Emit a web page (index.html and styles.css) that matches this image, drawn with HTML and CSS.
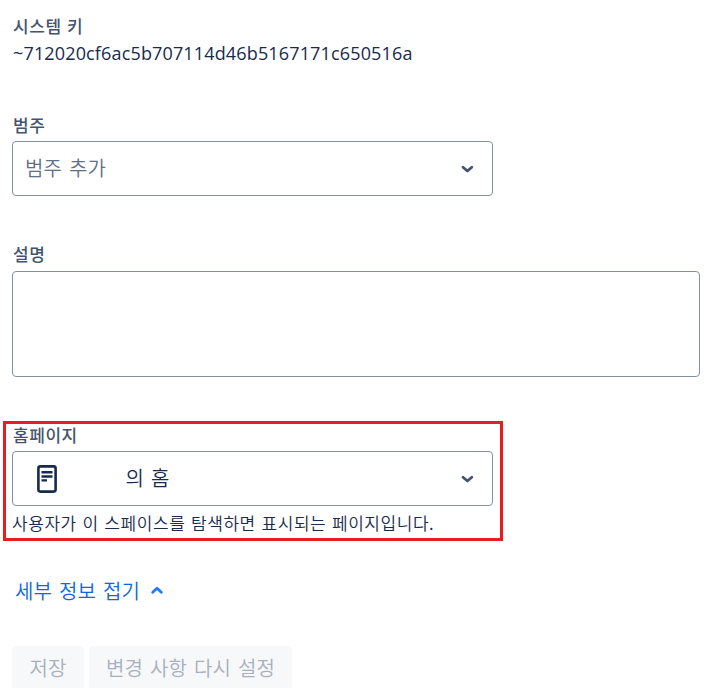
FILE: index.html
```html
<!DOCTYPE html>
<html lang="ko">
<head>
<meta charset="utf-8">
<title>스페이스 세부 정보</title>
<link rel="stylesheet" href="styles.css">
</head>
<body>
<main class="details">
  <section class="field field-key">
    <h2 class="label">시스템 키</h2>
    <p class="key"><span>~712020cf6ac5b707114d46b5167171c650516a</span></p>
  </section>
  <section class="field field-category">
    <h2 class="label">범주</h2>
    <div class="select">
      <span class="placeholder">범주 추가</span>
      <svg class="chevron" width="14" height="10" viewBox="0 0 14 10"><path d="M3 3.200 7.400 7l4.400-3.800"/></svg>
    </div>
  </section>
  <section class="field field-description">
    <h2 class="label">설명</h2>
    <div class="textarea"></div>
  </section>
  <section class="highlight">
    <h2 class="label">홈페이지</h2>
    <div class="select">
      <svg class="page-icon" width="20" height="28" viewBox="0 0 20 28"><rect x="1.400" y="1.400" width="17.200" height="25.200" rx="2"/><path d="M4.500 7.200h11M4.500 11.500h11M4.500 15.400h5.500"/></svg>
      <span class="home">의 홈</span>
      <svg class="chevron" width="14" height="10" viewBox="0 0 14 10"><path d="M3 3.200 7.400 7l4.400-3.800"/></svg>
    </div>
    <p class="help"><span>사용자가 이 스페이스를 탐색하면 표시되는 페이지입니다.</span></p>
  </section>
  <a class="toggle"><span>세부 정보 접기</span><svg class="chevron" width="14" height="10" viewBox="0 0 14 10"><path d="M2.700 7.200 7 3.300l4.300 3.900"/></svg></a>
  <div class="actions">
    <button class="button save" disabled>저장</button>
    <button class="button reset" disabled>변경 사항 다시 설정</button>
  </div>
</main>
</body>
</html>
```
FILE: styles.css
```css
* { box-sizing: border-box; }
body {
  margin: 0;
  height: 688px;
  overflow: hidden;
  background: #fff;
  color: #172b4d;
  font-family: "Noto Sans CJK KR", sans-serif;
  font-size: 20px;
  font-weight: 350;
  letter-spacing: 0.2px;
  word-spacing: 1px;
}
h2, p { margin: 0; }
.details { padding: 13px 16px 0 12px; }
.label {
  height: 26px;
  padding-left: 1px;
  color: #44546f;
  font-size: 17px;
  font-weight: 500;
  line-height: 26px;
  letter-spacing: 0.55px;
  word-spacing: 0;
}
.key {
  height: 29px;
  padding-left: 1px;
  font-family: "Open Sans", sans-serif;
  font-size: 18px;
  font-weight: 400;
  line-height: 29px;
  letter-spacing: 0.15px;
}
.field-category { margin-top: 44px; }
.label + .select { margin-top: 3px; }
.select {
  display: flex;
  align-items: center;
  width: 481px;
  height: 55px;
  padding: 0 18px 0 12px;
  border: 1px solid #8590a2;
  border-radius: 4px;
}
.placeholder, .home { padding-bottom: 2px; }
.placeholder { color: #626f86; }
.chevron {
  fill: none;
  stroke: #44546f;
  stroke-width: 2.8;
  stroke-linecap: round;
  stroke-linejoin: round;
}
.select .chevron { margin-left: auto; }
.field-description { margin-top: 45px; }
.textarea {
  height: 106px;
  margin-top: 4px;
  border: 1px solid #8590a2;
  border-radius: 4px;
}
.highlight {
  width: 500px;
  height: 120px;
  margin: 44px 0 0 -9px;
  padding: 0 0 0 6px;
  border: 3px solid #e81d1d;
}
.highlight .label { height: 24px; line-height: 22px; }
.page-icon {
  margin-left: 11.500px;
  fill: none;
  stroke: #172b4d;
  stroke-width: 2.6;
  stroke-linecap: round;
}
.page-icon path { stroke-width: 2.4; stroke-linecap: butt; }
.home { margin-left: 69px; }
.help {
  height: 30px;
  font-size: 17px;
  line-height: 34px;
  letter-spacing: 0.55px;
  word-spacing: 0.4px;
}
.toggle {
  display: flex;
  align-items: center;
  gap: 10px;
  height: 40px;
  margin-top: 29px;
  padding-left: 3px;
  color: #0c66e4;
}
.toggle .chevron { stroke: #1d7afc; }
.actions { display: flex; gap: 5px; margin-top: 36px; }
.button {
  flex: none;
  height: 43px;
  padding: 0;
  border: 0;
  border-radius: 4px;
  background: #f7f8f9;
  color: #a8b0be;
  font: inherit;
  letter-spacing: inherit;
  word-spacing: inherit;
}
.save { width: 72px; }
.reset { width: 203px; }
```
